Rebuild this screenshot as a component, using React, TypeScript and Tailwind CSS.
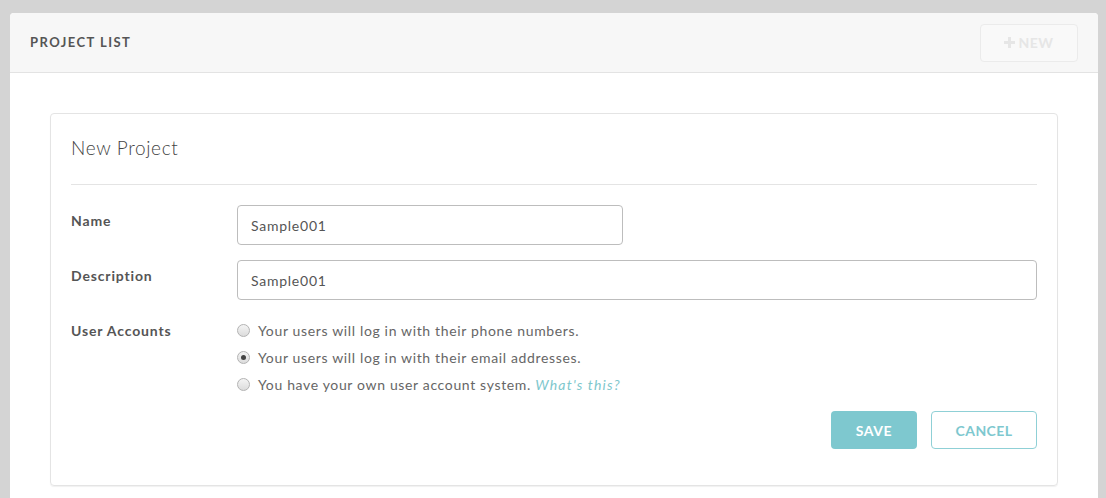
import React from "react";

function Radio({ checked }: { checked?: boolean }) {
  return (
    <span className="relative inline-flex h-[13px] w-[13px] shrink-0 items-center justify-center rounded-full border border-[#b3b3b3] bg-gradient-to-b from-[#f4f4f4] to-[#dcdcdc]">
      {checked && <span className="h-[5px] w-[5px] rounded-full bg-[#444]" />}
    </span>
  );
}

export default function App() {
  const font = { fontFamily: "Lato, 'Open Sans', sans-serif" };
  return (
    <div
      className="h-[498px] w-full overflow-hidden bg-[#d4d4d4] pl-[10px] pr-[8px] pt-[13px]"
      style={font}
    >
      <div className="h-full rounded-t-[4px] bg-white">
        <div className="flex h-[60px] items-center justify-between rounded-t-[4px] border-b border-[#e3e3e3] bg-[#f7f7f7] pl-[20px] pr-[20px]">
          <div className="text-[13px] font-bold tracking-[1.45px] text-[#555]">PROJECT LIST</div>
          <button className="flex h-[38px] w-[98px] items-center justify-center gap-[3px] rounded-[4px] border border-[#ebebeb] bg-[#f9f9f9] text-[14px] font-bold tracking-[0.5px] text-[#e6e6e6]">
            <svg width="11" height="11" viewBox="0 0 11 11">
              <path d="M4 0h3v4h4v3H7v4H4V7H0V4h4z" fill="#e6e6e6" />
            </svg>
            NEW
          </button>
        </div>
        <div className="px-[40px] pt-[40px]">
          <div className="rounded-[4px] border border-[#e4e4e4] px-[20px] pb-[36px] pt-[22px] shadow-[0_1px_1px_rgba(0,0,0,0.06)]">
            <div className="text-[19px] leading-[24px] font-light tracking-[0.64px] text-[#444]">New Project</div>
            <div className="mt-[24px] h-px bg-[#e4e4e4]" />
            <div className="mt-[20px] flex flex-col gap-[15px]">
              <div className="flex">
                <div className="w-[166px] shrink-0 pt-[6px] text-[14px] leading-[20px] font-bold tracking-[0.85px] text-[#555]">Name</div>
                <div className="flex h-[40px] w-[386px] items-center rounded-[4px] border border-[#bdbdbd] px-[13px] text-[14px] tracking-[0.75px] text-[#555]">
                  Sample001
                </div>
              </div>
              <div className="flex">
                <div className="w-[166px] shrink-0 pt-[6px] text-[14px] leading-[20px] font-bold tracking-[0.85px] text-[#555]">Description</div>
                <div className="flex h-[40px] flex-1 items-center rounded-[4px] border border-[#bdbdbd] px-[13px] text-[14px] tracking-[0.75px] text-[#555]">
                  Sample001
                </div>
              </div>
              <div className="flex">
                <div className="w-[166px] shrink-0 pt-[6px] text-[14px] leading-[20px] font-bold tracking-[0.85px] text-[#555]">User Accounts</div>
                <div className="flex flex-col pt-[2px] text-[14px] tracking-[0.65px] text-[#666]">
                  <div className="flex h-[27px] items-center gap-[8px]">
                    <Radio />
                    <span>Your users will log in with their phone numbers.</span>
                  </div>
                  <div className="flex h-[27px] items-center gap-[8px]">
                    <Radio checked />
                    <span>Your users will log in with their email addresses.</span>
                  </div>
                  <div className="flex h-[27px] items-center gap-[8px]">
                    <Radio />
                    <span>
                      You have your own user account system.{" "}
                      <span className="italic tracking-[1.2px] text-[#7ec7cd]">What's this?</span>
                    </span>
                  </div>
                </div>
              </div>
            </div>
            <div className="mt-[13px] flex justify-end gap-[14px]">
              <button className="h-[38px] w-[86px] rounded-[4px] bg-[#7ec8cf] text-[14px] font-bold tracking-[0.6px] text-white">SAVE</button>
              <button className="h-[38px] w-[106px] rounded-[4px] border border-[#8fd0d6] bg-white text-[14px] font-bold tracking-[0.4px] text-[#7ec8cf]">CANCEL</button>
            </div>
          </div>
        </div>
      </div>
    </div>
  );
}
